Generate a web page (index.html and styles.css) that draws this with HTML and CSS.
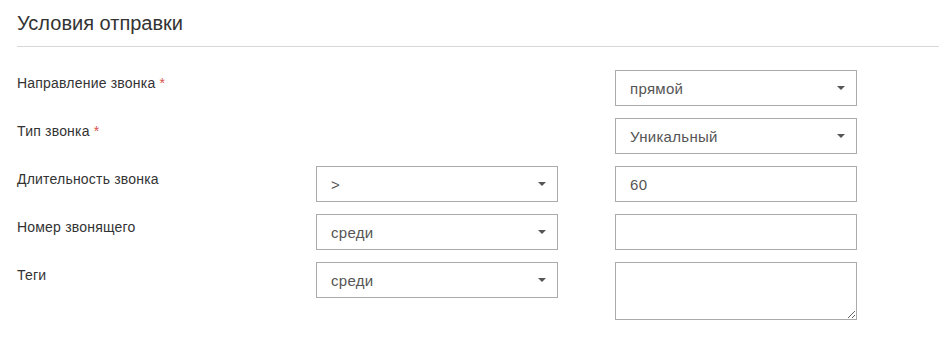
FILE: index.html
```html
<!DOCTYPE html>
<html lang="ru">
<head>
    <meta charset="UTF-8">
    <title>Условия отправки</title>
    <link rel="stylesheet" href="styles.css">
</head>
<body>

    <div class="panel">
        <h3 class="panel-title">Условия отправки</h3>

        <div class="form-grid">
            <label class="label">Направление звонка <span class="req">*</span></label>
            <div></div>
            <div class="select-wrap">
                <select class="control">
                    <option>прямой</option>
                    <option>обратный</option>
                </select>
            </div>

            <label class="label">Тип звонка <span class="req">*</span></label>
            <div></div>
            <div class="select-wrap">
                <select class="control">
                    <option>Уникальный</option>
                    <option>Повторный</option>
                </select>
            </div>

            <label class="label">Длительность звонка</label>
            <div class="select-wrap">
                <select class="control">
                    <option>&gt;</option>
                    <option>&lt;</option>
                </select>
            </div>
            <input class="control" type="text" value="60">

            <label class="label">Номер звонящего</label>
            <div class="select-wrap">
                <select class="control">
                    <option>среди</option>
                </select>
            </div>
            <input class="control" type="text">

            <label class="label">Теги</label>
            <div class="select-wrap">
                <select class="control">
                    <option>среди</option>
                </select>
            </div>
            <textarea class="control area"></textarea>
        </div>
    </div>

</body>
</html>
```

FILE: styles.css
```css
body {
    margin: 0;
    background-color: #fff;
    font-family: "Liberation Sans", Arial, sans-serif;
    color: #333;
}

.panel {
    padding: 0 0 0 17px;
}

.panel-title {
    margin: 0;
    padding: 11px 0 11px;
    font-size: 20px;
    font-weight: normal;
    line-height: 24px;
    color: #333;
    border-bottom: 1px solid #d8d8d8;
}

.form-grid {
    display: grid;
    grid-template-columns: 242px 242px 242px;
    column-gap: 57px;
    row-gap: 12px;
    margin-top: 23px;
}

.label {
    font-size: 14px;
    letter-spacing: 0.2px;
    line-height: 18px;
    padding-top: 4px;
    color: #333;
}

.req {
    color: #d9534f;
}

.control {
    box-sizing: border-box;
    width: 242px;
    height: 36px;
    margin: 0;
    padding: 0 14px;
    border: 1px solid #aaa;
    border-radius: 0;
    background-color: #fff;
    font-family: "Liberation Sans", Arial, sans-serif;
    font-size: 15px;
    letter-spacing: 0.3px;
    color: #555;
    outline: none;
}

.select-wrap {
    position: relative;
    width: 242px;
}

.select-wrap select {
    appearance: none;
    -webkit-appearance: none;
}

.select-wrap::after {
    content: "";
    position: absolute;
    right: 12px;
    top: 16px;
    border-left: 4px solid transparent;
    border-right: 4px solid transparent;
    border-top: 4px solid #555;
    pointer-events: none;
}

.area {
    height: 58px;
    padding: 6px 14px;
    resize: vertical;
}
```
